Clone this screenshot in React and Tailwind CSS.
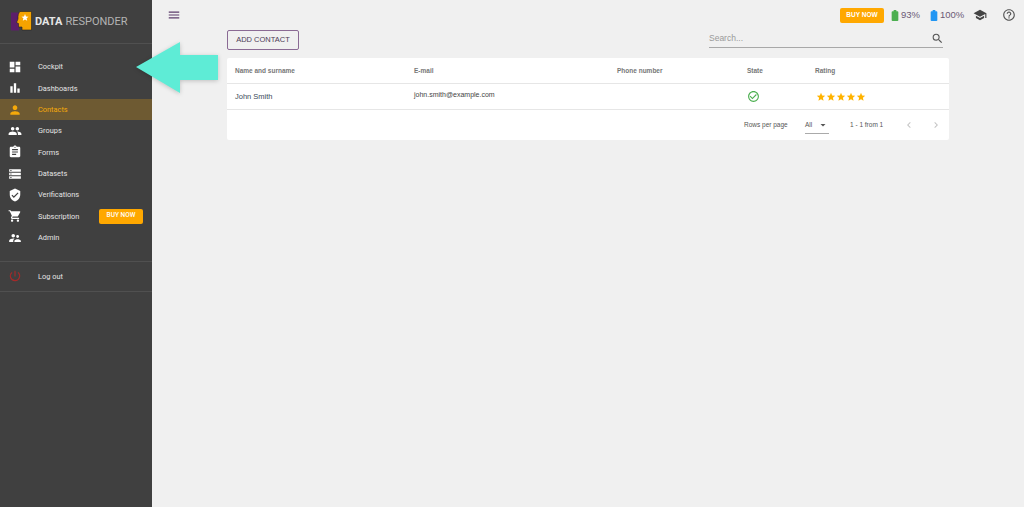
import React from 'react';
import {
  MdDashboard, MdBarChart, MdPerson, MdPeople, MdAssignment, MdStorage, MdVerifiedUser,
  MdShoppingCart, MdSupervisorAccount, MdPowerSettingsNew, MdMenu, MdSearch, MdSchool,
  MdHelpOutline, MdBatteryFull, MdCheckCircleOutline, MdStar, MdChevronLeft, MdChevronRight,
  MdArrowDropDown,
} from 'react-icons/md';

const menu = [
  { label: 'Cockpit', icon: MdDashboard },
  { label: 'Dashboards', icon: MdBarChart },
  { label: 'Contacts', icon: MdPerson, active: true },
  { label: 'Groups', icon: MdPeople },
  { label: 'Forms', icon: MdAssignment },
  { label: 'Datasets', icon: MdStorage },
  { label: 'Verifications', icon: MdVerifiedUser },
  { label: 'Subscription', icon: MdShoppingCart, buy: true },
  { label: 'Admin', icon: MdSupervisorAccount },
];

const Logo = () => (
  <svg width="21" height="21" viewBox="0 0 21 21">
    <rect x="0" y="1.5" width="8" height="18" fill="#5c1f6b" />
    <path d="M9 0.5 H20.5 V19 H11 V16 H7.5 V12.5 L5.5 11.5 L7 8 C6.8 4 7.5 2 9 0.5 Z" fill="#f5a300" stroke="#222" strokeWidth="0.6" />
    <path d="M14 3 L15 5.5 L17.5 5.7 L15.6 7.3 L16.2 9.8 L14 8.4 L11.8 9.8 L12.4 7.3 L10.5 5.7 L13 5.5 Z" fill="#fff" />
  </svg>
);

const Sidebar = () => (
  <aside className="w-[152px] shrink-0 h-full bg-[#404040] text-[#e4e4e4] font-['Roboto',sans-serif] shadow-[1px_0_2px_rgba(0,0,0,0.25)]">
    <div className="h-[44px] flex items-center pl-[11px] border-b border-[#505050]">
      <Logo />
      <span className="ml-[3px] text-[11px] leading-none whitespace-nowrap">
        <span className="font-bold text-[#e6e6e6]">DATA</span>
        <span className="ml-[3px] text-[#b4b4b4]">RESPONDER</span>
      </span>
    </div>
    <nav className="pt-[12.3px] pb-[12.7px]">
      {menu.map((item) => {
        const Icon = item.icon;
        return (
          <div
            key={item.label}
            className={`h-[21.33px] flex items-center pl-[8px] pr-[9px] text-[7.4px] ${
              item.active ? 'bg-[#6e5a32] text-[#f5a90a]' : ''
            }`}
          >
            <Icon className={`w-[14px] h-[14px] ${item.active ? 'text-[#f5a90a]' : 'text-white'}`} />
            <span className="ml-[16px]">{item.label}</span>
            {item.buy && (
              <span className="ml-auto w-[44px] h-[15px] flex items-center justify-center rounded-[2px] bg-[#ffa800] text-white text-[6.5px] font-medium">
                BUY NOW
              </span>
            )}
          </div>
        );
      })}
    </nav>
    <div className="h-[31px] flex items-center pl-[8px] text-[7.4px] border-y border-[#505050]">
      <MdPowerSettingsNew className="w-[14px] h-[14px] text-[#a32a2a]" />
      <span className="ml-[16px]">Log out</span>
    </div>
  </aside>
);

const TopBar = () => (
  <header className="h-[30px] flex items-center pl-[15px] pr-[8px] font-['Liberation_Sans',sans-serif]">
    <MdMenu className="w-[14px] h-[14px] text-[#5c3b6b]" />
    <div className="ml-auto flex items-center">
      <span className="w-[44px] h-[15px] flex items-center justify-center rounded-[2px] bg-[#ffa800] text-white text-[6.5px] font-bold">
        BUY NOW
      </span>
      <MdBatteryFull className="ml-[3px] w-[16px] h-[13px] text-[#4caf50]" preserveAspectRatio="none" />
      <span className="ml-[-2px] w-[18px] text-[9.5px] text-[#6b5a75]">93%</span>
      <MdBatteryFull className="ml-[6.5px] w-[16px] h-[13px] text-[#2196f3]" preserveAspectRatio="none" />
      <span className="ml-[-1.5px] w-[22px] text-[9.5px] text-[#6b5a75]">100%</span>
      <MdSchool className="ml-[11px] w-[14px] h-[14px] text-[#444]" />
      <MdHelpOutline className="ml-[15px] w-[14px] h-[14px] text-[#555]" />
    </div>
  </header>
);

const Toolbar = () => (
  <div className="h-[28px] flex items-start justify-between pl-[75px] pr-[81px] font-['Liberation_Sans',sans-serif]">
    <button className="w-[72px] h-[20px] rounded-[2px] border border-[#8a6a94] text-[7.5px] text-[#4d3b57]">
      ADD CONTACT
    </button>
    <div className="w-[234px] h-[18px] flex items-center justify-between border-b border-[#a8a8a8] text-[8.5px] text-[#9a9a9a]">
      <span>Search...</span>
      <MdSearch className="mr-[-1px] w-[13px] h-[13px] text-[#555]" />
    </div>
  </div>
);

const Table = () => (
  <section className="ml-[75px] w-[722px] rounded-[2px] bg-white text-[#555] font-['Liberation_Sans',sans-serif]">
    <div className="h-[26px] pl-[8px] grid grid-cols-[179px_203px_130px_68px_1fr] items-center border-b border-[#e6e6e6] text-[6.5px] font-bold text-[#777]">
      <span>Name and surname</span>
      <span>E-mail</span>
      <span>Phone number</span>
      <span>State</span>
      <span>Rating</span>
    </div>
    <div className="h-[26px] pl-[8px] grid grid-cols-[179px_203px_130px_68px_1fr] items-center border-b border-[#e6e6e6]">
      <span className="mt-[1px] text-[7.5px] text-[#3a4a5a]">John Smith</span>
      <span className="-mt-[2px] text-[7px] text-[#444]">john.smith@example.com</span>
      <span />
      <MdCheckCircleOutline className="w-[13px] h-[13px] text-[#4caf50]" />
      <span className="flex ml-[1px]">
        {[0, 1, 2, 3, 4].map((n) => (
          <MdStar key={n} className="w-[10px] h-[10px] text-[#ffb300]" />
        ))}
      </span>
    </div>
    <div className="h-[30px] flex items-center text-[6.5px] text-[#555]">
      <span className="ml-[517px] w-[43px] whitespace-nowrap">Rows per page</span>
      <span className="ml-[18px] w-[24px] h-[18px] flex items-center justify-between border-b border-[#aaa]">
        All
        <MdArrowDropDown className="w-[12px] h-[12px] text-[#555]" />
      </span>
      <span className="ml-[21px] w-[32px] whitespace-nowrap">1 - 1 from 1</span>
      <MdChevronLeft className="ml-[21px] w-[12px] h-[12px] text-[#c4c4c4]" />
      <MdChevronRight className="ml-[15px] w-[12px] h-[12px] text-[#c4c4c4]" />
    </div>
  </section>
);

const Arrow = () => (
  <svg className="absolute left-[136px] top-[42px] drop-shadow-[0_1px_2px_rgba(0,0,0,0.2)]" width="82" height="51" viewBox="0 0 82 51">
    <path d="M0 25 L44 0 V13 H82 V38 H44 V51 Z" fill="#5eecd6" />
  </svg>
);

export default function App() {
  return (
    <div className="relative w-[1024px] h-[507px] flex overflow-hidden bg-[#f0f0f0]">
      <Sidebar />
      <main className="flex-1 min-w-0 bg-[#f0f0f0]">
        <TopBar />
        <Toolbar />
        <Table />
      </main>
      <Arrow />
    </div>
  );
}
